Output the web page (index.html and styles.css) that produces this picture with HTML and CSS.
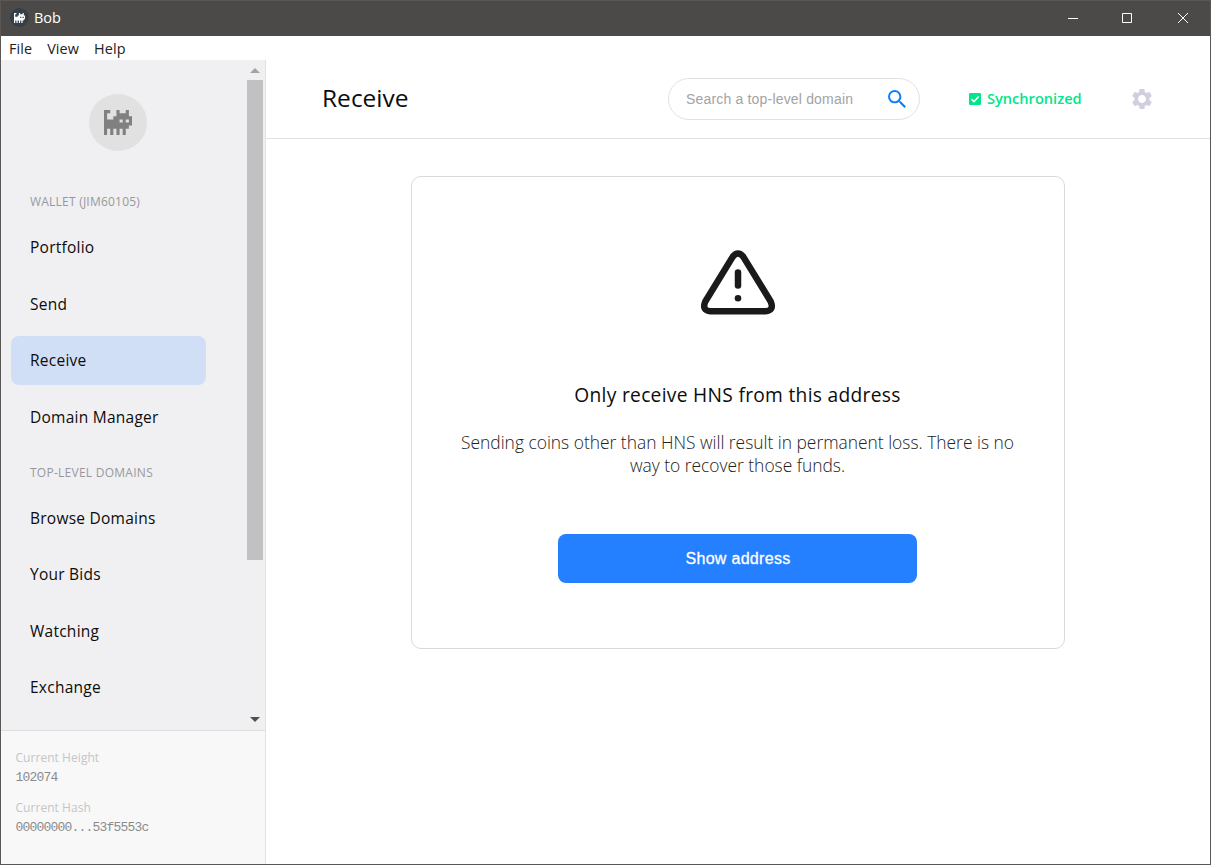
FILE: index.html
```html
<!DOCTYPE html>
<html lang="en">
<head>
<meta charset="utf-8">
<title>Bob</title>
<link rel="stylesheet" href="styles.css">
</head>
<body>
<svg width="0" height="0" class="defs">
  <symbol id="cat" viewBox="0 0 9 8">
    <path fill="currentColor" fill-rule="evenodd" d="M0 0H2V1H1V3H3V2H4V0H5V1H7V0H8V2H9V5H8V6H7V8H6V6H5V8H4V6H3V8H2V6H1V8H0ZM5 3V4H6V3ZM7 3V4H8V3Z"/>
  </symbol>
</svg>
<div class="window">
  <header class="titlebar">
    <span class="app-icon"><svg><use href="#cat"/></svg></span>
    <span class="app-name">Bob</span>
    <div class="controls">
      <svg viewBox="0 0 10 10"><path d="M0 5.500H10"/></svg>
      <svg viewBox="0 0 10 10"><path d="M.5 .5H9.5V9.5H.5Z"/></svg>
      <svg viewBox="0 0 10 10"><path d="M0 0L10 10M10 0L0 10"/></svg>
    </div>
  </header>
  <nav class="menubar"><span>File</span><span>View</span><span>Help</span></nav>
  <div class="body">
    <aside class="sidebar">
      <div class="scroll">
        <div class="nav">
          <div class="avatar"><svg><use href="#cat"/></svg></div>
          <div class="section">Wallet (JIM60105)</div>
          <div class="items">
            <a class="item">Portfolio</a>
            <a class="item">Send</a>
            <a class="item active">Receive</a>
            <a class="item">Domain Manager</a>
          </div>
          <div class="section domains">Top-Level Domains</div>
          <div class="items">
            <a class="item">Browse Domains</a>
            <a class="item">Your Bids</a>
            <a class="item">Watching</a>
            <a class="item">Exchange</a>
          </div>
        </div>
        <div class="scrollbar">
          <svg class="up" viewBox="0 0 10 5"><path d="M0 5L5 0L10 5Z"/></svg>
          <div class="thumb"></div>
          <svg class="down" viewBox="0 0 10 5"><path d="M0 0L5 5L10 0Z"/></svg>
        </div>
      </div>
      <div class="status">
        <div class="label">Current Height</div>
        <div class="value">102074</div>
        <div class="label second">Current Hash</div>
        <div class="value">00000000...53f5553c</div>
      </div>
    </aside>
    <main class="main">
      <div class="topbar">
        <h1 class="title">Receive</h1>
        <div class="search">
          <span class="placeholder">Search a top-level domain</span>
          <svg viewBox="3 3 17.5 17.5"><path fill="#0a80ff" d="M15.5 14h-.79l-.28-.27A6.47 6.47 0 0 0 16 9.5 6.5 6.5 0 1 0 9.5 16c1.61 0 3.09-.59 4.23-1.57l.27.28v.79l5 4.99L20.49 19l-4.99-5zm-6 0C7.01 14 5 11.99 5 9.5S7.01 5 9.5 5 14 7.01 14 9.5 11.99 14 9.5 14z"/></svg>
        </div>
        <div class="sync">
          <svg viewBox="0 0 12 12"><rect width="12" height="12" rx="1.3" fill="#00e68a"/><path d="M2.5 6.1L5 8.6L9.7 3.6" fill="none" stroke="#fff" stroke-width="1.5"/></svg>
          <span>Synchronized</span>
        </div>
        <svg class="gear" viewBox="2 2 20 20"><path fill="#d0cfe0" d="M19.43 12.98c.04-.32.07-.64.07-.98s-.03-.66-.07-.98l2.11-1.65c.19-.15.24-.42.12-.64l-2-3.46c-.12-.22-.39-.3-.61-.22l-2.49 1c-.52-.4-1.08-.73-1.69-.98l-.38-2.65C14.46 2.18 14.25 2 14 2h-4c-.25 0-.46.18-.49.42l-.38 2.65c-.61.25-1.17.59-1.69.98l-2.49-1c-.23-.09-.49 0-.61.22l-2 3.46c-.13.22-.07.49.12.64l2.11 1.65c-.04.32-.07.65-.07.98s.03.66.07.98l-2.11 1.65c-.19.15-.24.42-.12.64l2 3.46c.12.22.39.3.61.22l2.49-1c.52.4 1.08.73 1.69.98l.38 2.65c.03.24.24.42.49.42h4c.25 0 .46-.18.49-.42l.38-2.65c.61-.25 1.17-.59 1.69-.98l2.49 1c.23.09.49 0 .61-.22l2-3.46c.12-.22.07-.49-.12-.64l-2.11-1.65zM12 16c-2.2 0-4-1.8-4-4s1.8-4 4-4 4 1.8 4 4-1.8 4-4 4z"/></svg>
      </div>
      <div class="content">
        <section class="card">
          <svg class="warning" viewBox="0 0 74 65"><path d="M31.8 6.6Q37 .2 42.2 6.6L69.7 51.5Q73.400 60.700 64.500 61.200H9.500Q.600 60.700 4.300 51.500Z"/><path d="M37 22.500V35.500"/><circle cx="37" cy="48.300" r="3.300"/></svg>
          <h2 class="heading">Only receive HNS from this address</h2>
          <p class="text">Sending coins other than HNS will result in permanent loss. There is no<br>way to recover those funds.</p>
          <button class="button">Show address</button>
        </section>
      </div>
    </main>
  </div>
</div>
</body>
</html>
```
FILE: styles.css
```css
* { box-sizing: border-box; }
body { margin: 0; font-family: "Open Sans", "Noto Sans", sans-serif; }
.defs { display: block; }
.window { width: 1211px; height: 865px; border: 1px solid #5a5856; background: #fff; display: flex; flex-direction: column; overflow: hidden; }
.titlebar { height: 35px; flex: none; background: #4c4a48; color: #fff; display: flex; align-items: center; padding: 0 0 2px 9px; }
.app-icon { width: 19px; height: 19px; border-radius: 50%; background: #363f45; color: #fff; display: flex; align-items: center; justify-content: center; }
.app-icon svg { width: 11px; height: 10px; }
.app-name { font-size: 14.500px; font-weight: 400; margin-left: 5px; }
.controls { margin-left: auto; display: flex; margin-right: 22px; gap: 46px; align-items: center; }
.controls svg { width: 10px; height: 10px; fill: none; stroke: #fff; stroke-width: 1; overflow: visible; }
.controls svg:first-child { margin-right: -2px; }
.menubar { height: 24px; flex: none; display: flex; align-items: center; padding-left: 8px; gap: 15px; font-size: 14.400px; letter-spacing: .1px; color: #222; font-weight: 400; }
.body { flex: 1; display: flex; min-height: 0; }
.sidebar { width: 265px; flex: none; border-right: 1px solid #e2e2e3; display: flex; flex-direction: column; }
.scroll { height: 671px; flex: none; border-bottom: 1px solid #dededf; background: #f0f0f2; display: flex; }
.nav { width: 246px; padding: 34px 41px 0 10px; }
.avatar { width: 58px; height: 57px; border-radius: 50%; background: #e1e1e1; color: #808080; margin-left: 78px; display: flex; align-items: center; justify-content: center; }
.avatar svg { width: 28px; height: 25px; }
.section { height: 20px; line-height: 20px; margin-top: 41px; padding-left: 19px; font-size: 12px; letter-spacing: .22px; color: #98989b; text-transform: uppercase; white-space: nowrap; }
.section.domains { margin-top: 21px; letter-spacing: .26px; }
.items { margin-top: 11px; display: flex; flex-direction: column; gap: 7.500px; }
.item { height: 49px; line-height: 49px; padding-left: 19px; border-radius: 8px; font-size: 15.500px; letter-spacing: .25px; color: #0c0c0c; white-space: nowrap; }
.item.active { background: #d1dff6; }
.scrollbar { width: 18px; background: #f0f0f0; display: flex; flex-direction: column; padding-right: 2px; }
.scrollbar svg { width: 10px; height: 5px; margin-left: 3px; }
.up { fill: #a3a3a3; margin-top: 8px; }
.thumb { height: 480px; background: #c1c1c1; margin-top: 7px; }
.down { fill: #505050; margin-top: 157px; }
.status { flex: 1; background: #f8f8f8; padding: 18px 0 0 14.500px; }
.label { height: 18px; line-height: 18px; font-size: 12px; letter-spacing: .05px; color: #c5c5c5; }
.label.second { margin-top: 13px; }
.value { height: 19px; line-height: 21px; font-size: 13px; color: #8b8b8b; font-family: "Liberation Mono", monospace; letter-spacing: -.8px; }
.main { flex: 1; display: flex; flex-direction: column; }
.topbar { height: 79px; border-bottom: 1px solid #e2e2e2; display: flex; align-items: center; padding-left: 56px; }
.title { margin: 0; width: 346px; padding-bottom: 4px; font-size: 24.500px; font-weight: 400; color: #0c0c0c; }
.search { width: 252px; height: 42px; border: 1px solid #e2e2e2; border-radius: 21px; display: flex; align-items: center; justify-content: space-between; padding: 0 13px 0 17px; }
.placeholder { font: 14px "Liberation Sans", Arial, sans-serif; letter-spacing: .18px; padding-bottom: 1px; color: #a3a3a3; white-space: nowrap; }
.search svg { width: 18px; height: 18px; }
.sync { display: flex; align-items: center; gap: 6px; margin-left: 49px; width: 163px; font-size: 14.600px; font-weight: 600; color: #00e68a; }
.sync svg { width: 12px; height: 12px; }
.sync span { padding-bottom: 2px; }
.gear { width: 20px; height: 20px; }
.content { flex: 1; padding: 37px 0 0 145px; }
.card { width: 654px; height: 473px; border: 1px solid #d9d9d9; border-radius: 10px; display: flex; flex-direction: column; align-items: center; padding: 73px 1px 0 0; }
.warning { width: 74px; height: 65px; flex: none; fill: none; stroke: #1a1a1a; stroke-width: 6.500px; stroke-linecap: round; stroke-linejoin: round; }
.warning circle { fill: #1a1a1a; stroke: none; }
.heading { margin: 66px 0 0; height: 28px; line-height: 28px; font-size: 19.200px; letter-spacing: .3px; font-weight: 500; color: #0c0c0c; white-space: nowrap; }
.text { margin: 22px 0 0; line-height: 23px; font-size: 17.400px; font-weight: 300; color: #222; text-align: center; white-space: nowrap; }
.button { margin: 57px 1px 0 0; width: 359px; height: 49px; border: 0; border-radius: 8px; background: #2480ff; color: #fff; font: 16px "Liberation Sans", Arial, sans-serif; letter-spacing: .3px; padding-left: 8px; -webkit-text-stroke: .3px #fff; }
```
